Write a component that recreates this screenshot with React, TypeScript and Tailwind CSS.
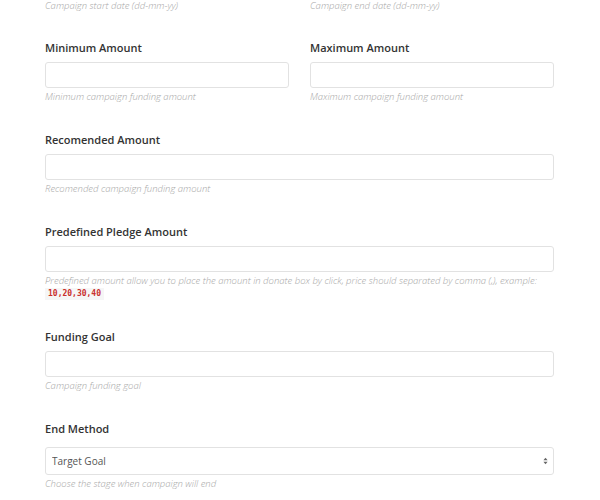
import type { ReactNode } from 'react';

const FONT = { fontFamily: '"Open Sans", "Liberation Sans", sans-serif' };

const Label = ({ children }: { children: ReactNode }) => (
	<p className="text-[11px] leading-4 font-semibold text-[#333]">{children}</p>
);

const Help = ({ children }: { children: ReactNode }) => (
	<p className="mt-[3px] text-[9.5px] leading-[12px] italic font-light text-[#a6a6a6]">{children}</p>
);

const Input = () => (
	<input
		type="text"
		className="mt-1.5 block w-full h-[26px] rounded-[3px] border border-[#e2e2e2] bg-white px-2 text-[10px] outline-none"
	/>
);

const Field = ({ label, help }: { label: string; help: ReactNode }) => (
	<div>
		<Label>{label}</Label>
		<Input />
		<Help>{help}</Help>
	</div>
);

export default function App() {
	return (
		<div className="h-[500px] w-[600px] overflow-hidden bg-white" style={FONT}>
			<div className="pl-[45px] pr-[46px] flex flex-col gap-[29px]">
				<div className="-mb-px grid grid-cols-2 gap-x-[21px]">
					<p className="text-[9.5px] leading-[12px] italic font-light text-[#a6a6a6]">Campaign start date (dd-mm-yy)</p>
					<p className="text-[9.5px] leading-[12px] italic font-light text-[#a6a6a6]">Campaign end date (dd-mm-yy)</p>
				</div>

				<div className="grid grid-cols-2 gap-x-[21px]">
					<Field label="Minimum Amount" help="Minimum campaign funding amount" />
					<Field label="Maximum Amount" help="Maximum campaign funding amount" />
				</div>

				<Field label="Recomended Amount" help="Recomended campaign funding amount" />

				<Field
					label="Predefined Pledge Amount"
					help={
						<>
							Predefined amount allow you to place the amount in donate box by click, price should separated by comma (,), example:
							<br />
							<code
								className="not-italic inline-block bg-[#f6f6f6] px-[3px] text-[8px] leading-[12px] font-semibold text-[#c9302c]"
								style={{ fontFamily: '"DejaVu Sans Mono", "Liberation Mono", monospace' }}
							>
								10,20,30,40
							</code>
						</>
					}
				/>

				<Field label="Funding Goal" help="Campaign funding goal" />

				<div>
					<Label>End Method</Label>
					<div className="relative mt-[10px]">
						<select className="block w-full h-[28px] appearance-none rounded-[3px] border border-[#e2e2e2] bg-white pl-[6px] text-[10px] text-[#555] outline-none">
							<option>Target Goal</option>
						</select>
						<svg
							className="pointer-events-none absolute right-[6px] top-1/2 -translate-y-1/2"
							width="5"
							height="8"
							viewBox="0 0 6 9"
						>
							<path d="M3 0.5 L5.5 3.5 H0.5 Z" fill="#666" />
							<path d="M3 8.5 L5.5 5.5 H0.5 Z" fill="#666" />
						</svg>
					</div>
					<Help>Choose the stage when campaign will end</Help>
				</div>
			</div>
		</div>
	);
}
